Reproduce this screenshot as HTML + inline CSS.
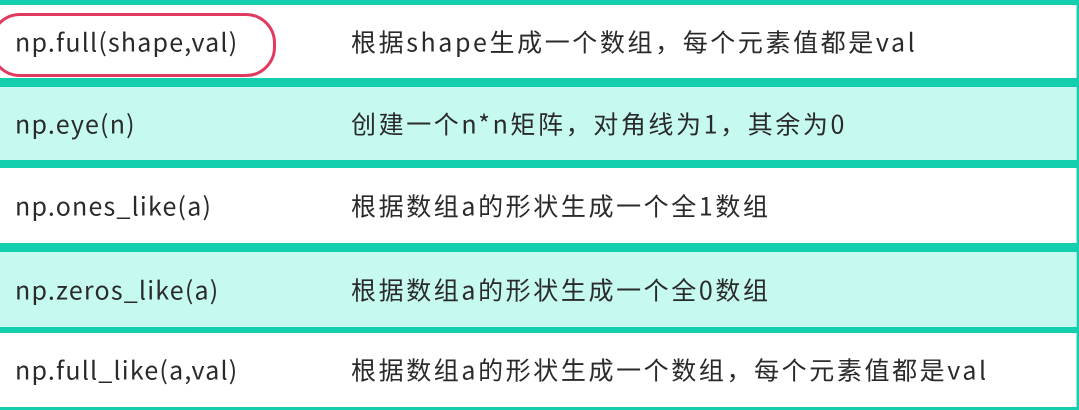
<!DOCTYPE html>
<html><head><meta charset="utf-8"><style>
body{margin:0;width:1079px;height:410px;background:#14cfae;position:relative;overflow:hidden;font-family:"Noto Sans CJK SC","Liberation Sans",sans-serif;color:#2a2a2a}
.r{position:absolute;left:0;width:1077px;box-sizing:border-box;border-right:1px solid #9ee8da}
.w{background:#fff}.c{background:#c6faf1}
.a,.b{position:absolute;top:50%;transform:translateY(-50%);white-space:nowrap;line-height:1}
.a{left:15px;font-size:25px;letter-spacing:1.2px}.b{left:351px;font-size:25px;letter-spacing:2.6px}
.oval{position:absolute;left:-10px;top:13px;width:280px;height:58px;border:3px solid #e23a5e;border-radius:30px}
</style></head><body>
<div class="r w" style="top:5px;height:73px"><span class="a">np.full(shape,val)</span><span class="b">根据shape生成一个数组，每个元素值都是val</span></div>
<div class="oval"></div>
<div class="r c" style="top:87px;height:73px"><span class="a">np.eye(n)</span><span class="b">创建一个n*n矩阵，对角线为1，其余为0</span></div>
<div class="r w" style="top:168px;height:75px"><span class="a">np.ones_like(a)</span><span class="b">根据数组a的形状生成一个全1数组</span></div>
<div class="r c" style="top:252px;height:75px"><span class="a">np.zeros_like(a)</span><span class="b">根据数组a的形状生成一个全0数组</span></div>
<div class="r w" style="top:333px;height:74px"><span class="a">np.full_like(a,val)</span><span class="b">根据数组a的形状生成一个数组，每个元素值都是val</span></div>
</body></html>
